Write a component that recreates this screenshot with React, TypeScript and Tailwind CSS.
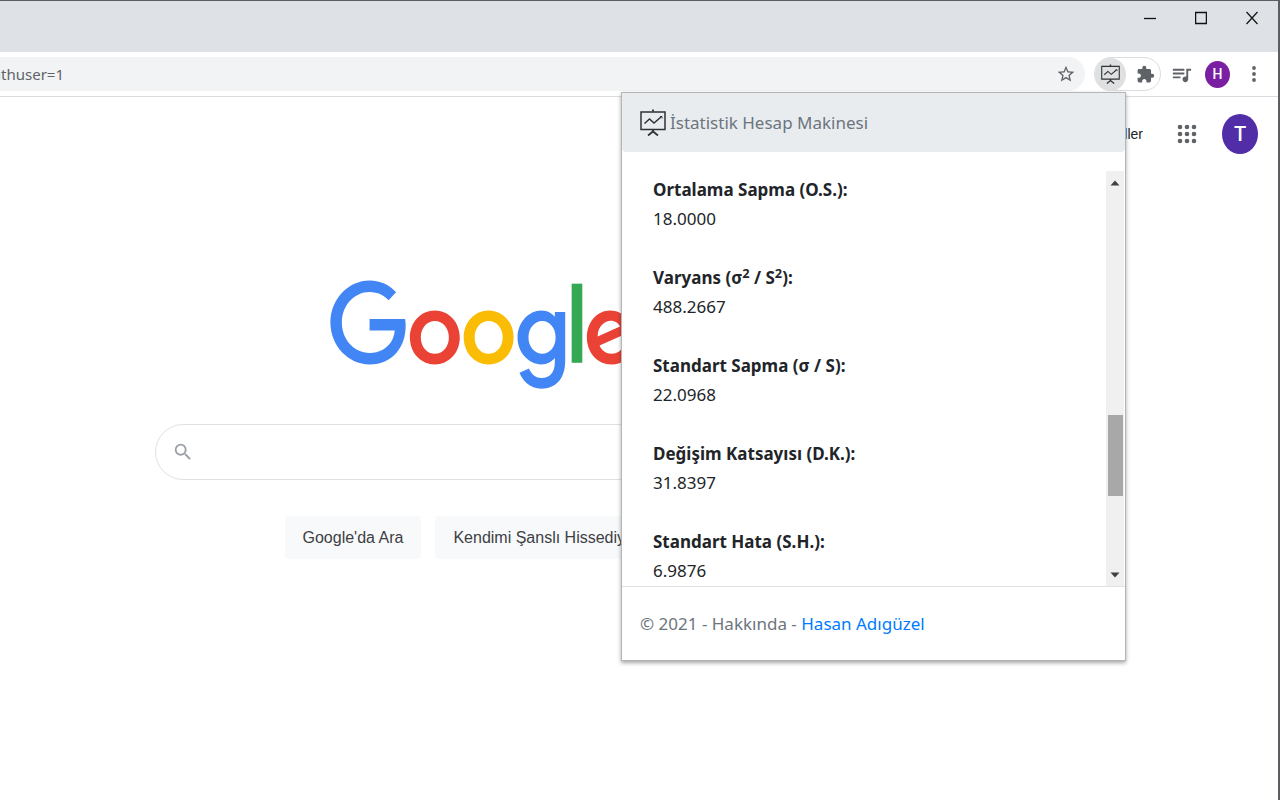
import React from 'react';
import { MdExtension, MdQueueMusic, MdSearch, MdStarBorder } from 'react-icons/md';

type Stat = {
  label: React.ReactNode;
  value: string;
};

const stats: Stat[] = [
  { label: 'Ortalama Sapma (O.S.):', value: '18.0000' },
  {
    label: (
      <>
        Varyans (σ<sup>2</sup> / S<sup>2</sup>):
      </>
    ),
    value: '488.2667',
  },
  { label: 'Standart Sapma (σ / S):', value: '22.0968' },
  { label: 'Değişim Katsayısı (D.K.):', value: '31.8397' },
  { label: 'Standart Hata (S.H.):', value: '6.9876' },
];

function BoardIcon({ className }: { className?: string }) {
  return (
    <svg viewBox="0 0 26 27" className={className} fill="none" stroke="#2f3236" aria-hidden="true">
      <path d="M1 3h24v17.5H1z" strokeWidth="1.5" />
      <path d="M13 0.5v2M13 20.5v2" strokeWidth="1.8" />
      <path d="M4.5 14.5l5-4.5 4.5 4 7-6" strokeWidth="1.5" />
      <path d="M20 7.5h2v2" strokeWidth="1" />
      <path d="M8 26.5l5-4 5 4" strokeWidth="1.8" />
    </svg>
  );
}

function GoogleLogo() {
  return (
    <svg
      viewBox="0 0 272 92"
      preserveAspectRatio="none"
      className="h-[112px] w-[305px]"
      role="img"
      aria-label="Google"
    >
      <path
        fill="#EA4335"
        d="M115.75 47.18c0 12.77-9.99 22.18-22.25 22.18s-22.25-9.41-22.25-22.18C71.25 34.32 81.24 25 93.5 25s22.25 9.32 22.25 22.18zm-9.74 0c0-7.98-5.79-13.44-12.51-13.44S80.99 39.2 80.99 47.18c0 7.9 5.79 13.44 12.51 13.44s12.51-5.55 12.51-13.44z"
      />
      <path
        fill="#FBBC05"
        d="M163.75 47.18c0 12.77-9.99 22.18-22.25 22.18s-22.25-9.41-22.25-22.18c0-12.85 9.99-22.18 22.25-22.18s22.25 9.32 22.25 22.18zm-9.74 0c0-7.98-5.79-13.44-12.51-13.44s-12.51 5.46-12.51 13.44c0 7.9 5.79 13.44 12.51 13.44s12.51-5.55 12.51-13.44z"
      />
      <path
        fill="#4285F4"
        d="M209.75 26.34v39.82c0 16.38-9.66 23.07-21.08 23.07-10.75 0-17.22-7.19-19.66-13.07l8.48-3.53c1.51 3.61 5.21 7.87 11.17 7.87 7.31 0 11.84-4.51 11.84-13v-3.19h-.34c-2.18 2.69-6.38 5.04-11.68 5.04-11.09 0-21.25-9.66-21.25-22.09 0-12.52 10.16-22.26 21.25-22.26 5.29 0 9.49 2.35 11.68 4.96h.34v-3.61h9.25zm-8.56 20.92c0-7.81-5.21-13.52-11.84-13.52-6.72 0-12.35 5.71-12.35 13.52 0 7.73 5.63 13.36 12.35 13.36 6.63 0 11.84-5.63 11.84-13.36z"
      />
      <path fill="#34A853" d="M225 3v65h-9.5V3h9.5z" />
      <path
        fill="#EA4335"
        d="M262.02 54.48l7.56 5.04c-2.44 3.61-8.32 9.83-18.48 9.83-12.6 0-22.01-9.74-22.01-22.18 0-13.19 9.49-22.18 20.92-22.18 11.51 0 17.14 9.16 18.98 14.11l1.01 2.52-29.65 12.28c2.27 4.45 5.8 6.72 10.75 6.72 4.96 0 8.4-2.44 10.92-6.14zm-23.27-7.98l19.82-8.23c-1.09-2.77-4.37-4.7-8.23-4.7-4.95 0-11.84 4.37-11.59 12.93z"
      />
      <path
        fill="#4285F4"
        d="M35.29 41.41V32H67c.31 1.64.47 3.58.47 5.68 0 7.06-1.93 15.79-8.15 22.01-6.05 6.3-13.78 9.66-24.02 9.66C16.32 69.35.36 53.89.36 34.91.36 15.93 16.32.47 35.3.47c10.5 0 17.98 4.12 23.6 9.49l-6.64 6.64c-4.03-3.78-9.49-6.72-16.97-6.72-13.86 0-24.7 11.17-24.7 25.03 0 13.86 10.84 25.03 24.7 25.03 8.99 0 14.11-3.61 17.39-6.89 2.66-2.66 4.41-6.46 5.1-11.65l-22.49.01z"
      />
    </svg>
  );
}

function TitleBar() {
  return (
    <div className="flex h-[51px] items-start justify-end gap-[35px] bg-[#dee1e6] pr-[18px] pt-2">
      <button aria-label="Simge durumuna küçült" className="flex h-[18px] w-4 items-center justify-center">
        <svg viewBox="0 0 12 14" className="h-[14px] w-3" stroke="#111" fill="none">
          <path d="M0 7.5h12" strokeWidth="1.3" />
        </svg>
      </button>
      <button aria-label="Ekranı kapla" className="flex h-[18px] w-4 items-center justify-center">
        <svg viewBox="0 0 12 14" className="h-[14px] w-3" stroke="#111" fill="none">
          <path d="M0.6 1.5h10.8v11H0.6z" strokeWidth="1.3" />
        </svg>
      </button>
      <button aria-label="Kapat" className="flex h-[18px] w-4 items-center justify-center">
        <svg viewBox="0 0 12 14" className="h-[14px] w-3" stroke="#111" fill="none">
          <path d="M0.5 1l11 12M11.5 1l-11 12" strokeWidth="1.2" />
        </svg>
      </button>
    </div>
  );
}

function Toolbar() {
  return (
    <div className="flex h-[45px] items-center border-b border-[#dadce0] bg-white pr-5">
      <div className="flex h-[34px] min-w-0 flex-1 items-center justify-between rounded-r-full bg-[#f1f3f4] pr-[9px]">
        <div className="flex w-[64px] justify-end overflow-hidden">
          <span className="font-['Noto_Sans',sans-serif] text-[15px] leading-5 text-[#5f6368]">authuser=1</span>
        </div>
        <button aria-label="Yer işareti ekle">
          <MdStarBorder className="size-5 text-[#5f6368]" />
        </button>
      </div>
      <div className="ml-[9px] flex h-[34px] w-[67px] items-center rounded-full border border-[#dadce0]">
        <button
          aria-label="İstatistik Hesap Makinesi"
          className="flex h-[33px] w-[31px] shrink-0 items-center justify-center rounded-[50%] bg-[#dfe0e1]"
        >
          <BoardIcon className="h-5 w-[19px]" />
        </button>
        <button aria-label="Uzantılar" className="ml-[10px] shrink-0">
          <MdExtension className="size-[19px] text-[#5f6368]" />
        </button>
      </div>
      <button aria-label="Medya" className="ml-[9px]">
        <MdQueueMusic className="size-[23px] text-[#5f6368]" />
      </button>
      <button
        aria-label="Profil"
        className="ml-3 flex h-[27px] w-[25px] items-center justify-center rounded-[50%] bg-[#7b1fa2] font-[Roboto,sans-serif] text-[14px] font-medium text-white"
      >
        H
      </button>
      <button aria-label="Menü" className="ml-[20px]">
        <svg viewBox="0 0 8 18" className="h-[18px] w-2" fill="#5f6368">
          <circle cx="4" cy="3" r="1.9" />
          <circle cx="4" cy="9" r="1.9" />
          <circle cx="4" cy="15" r="1.9" />
        </svg>
      </button>
    </div>
  );
}

function SearchPage() {
  return (
    <div className="bg-white">
      <header className="flex items-center justify-end pr-5 pt-[17px]">
        <a href="#gorseller" className="font-['Liberation_Sans',sans-serif] text-[14px] leading-5 text-[#202124]">
          Görseller
        </a>
        <button aria-label="Google uygulamaları" className="ml-[34px]">
          <svg viewBox="0 0 20 20" className="size-5" fill="#5f6368">
            {[3, 10, 17].map((y) =>
              [3, 10, 17].map((x) => <circle key={`${x}-${y}`} cx={x} cy={y} r="2.3" />)
            )}
          </svg>
        </button>
        <button
          aria-label="Google Hesabı"
          className="ml-[25px] flex h-10 w-9 items-center justify-center rounded-[50%] bg-[#512da8] font-[Roboto,sans-serif] text-[20px] font-medium text-white"
        >
          T
        </button>
      </header>
      <main className="flex flex-col items-center pr-[314px] pt-[126px]">
        <GoogleLogo />
        <form className="mt-8 flex w-full flex-col items-center" onSubmit={(e) => e.preventDefault()}>
          <label className="flex h-14 w-[654px] items-center gap-3 rounded-full border border-[#dfe1e5] pl-4 pr-5">
            <MdSearch className="size-[22px] shrink-0 text-[#9aa0a6]" />
            <input aria-label="Ara" className="min-w-0 flex-1 bg-transparent text-[16px] outline-none" />
          </label>
          <div className="mt-9 flex gap-[14px] font-['Liberation_Sans',sans-serif] text-[16px] text-[#3c4043]">
            <button type="submit" className="h-[43px] rounded bg-[#f8f9fa] px-[18px]">
              Google'da Ara
            </button>
            <button type="button" className="h-[43px] rounded bg-[#f8f9fa] px-[18px]">
              Kendimi Şanslı Hissediyorum
            </button>
          </div>
        </form>
      </main>
    </div>
  );
}

function Scrollbar() {
  return (
    <div className="mr-px flex w-[18px] flex-col items-center bg-[#f0f0f0]" aria-hidden="true">
      <svg viewBox="0 0 10 24" className="h-6 w-[10px] shrink-0" fill="#404040">
        <path d="M0.5 14.5l4.5-5 4.5 5z" />
      </svg>
      <div className="flex-[221]" />
      <div className="h-[81px] w-[15px] bg-[#a8a8a8]" />
      <div className="flex-[66]" />
      <svg viewBox="0 0 10 24" className="h-6 w-[10px] shrink-0" fill="#404040">
        <path d="M0.5 10.5l4.5 5 4.5-5z" />
      </svg>
    </div>
  );
}

function ExtensionPopup() {
  return (
    <section className="absolute right-[152px] top-[91px] w-[505px] border border-[#b4b5b7] bg-white font-['Noto_Sans',sans-serif] text-[17px] shadow-[0_2px_4px_rgba(0,0,0,0.35)]">
      <header className="flex h-[59px] items-center gap-1 rounded-b bg-[#e9ecef] pl-[18px] text-[#6c757d]">
        <BoardIcon className="h-[27px] w-[26px]" />
        <h1>İstatistik Hesap Makinesi</h1>
      </header>
      <div className="mt-[19px] flex border-b border-[#dee2e6]">
        <dl className="flex flex-1 flex-col gap-[30px] pb-px pl-[31px] pt-1 leading-[29px] text-[#212529]">
          {stats.map((stat) => (
            <div key={stat.value}>
              <dt className="font-bold">{stat.label}</dt>
              <dd>{stat.value}</dd>
            </div>
          ))}
        </dl>
        <Scrollbar />
      </div>
      <footer className="flex h-[73px] items-center pl-[18px] text-[#6c757d]">
        <p>
          © 2021 - Hakkında -{' '}
          <a href="#hasan" className="text-[#007bff]">
            Hasan Adıgüzel
          </a>
        </p>
      </footer>
    </section>
  );
}

function App() {
  return (
    <div className="relative min-h-screen border-r-2 border-t border-[#5b5e62] bg-white">
      <TitleBar />
      <Toolbar />
      <SearchPage />
      <ExtensionPopup />
    </div>
  );
}

export default App;
